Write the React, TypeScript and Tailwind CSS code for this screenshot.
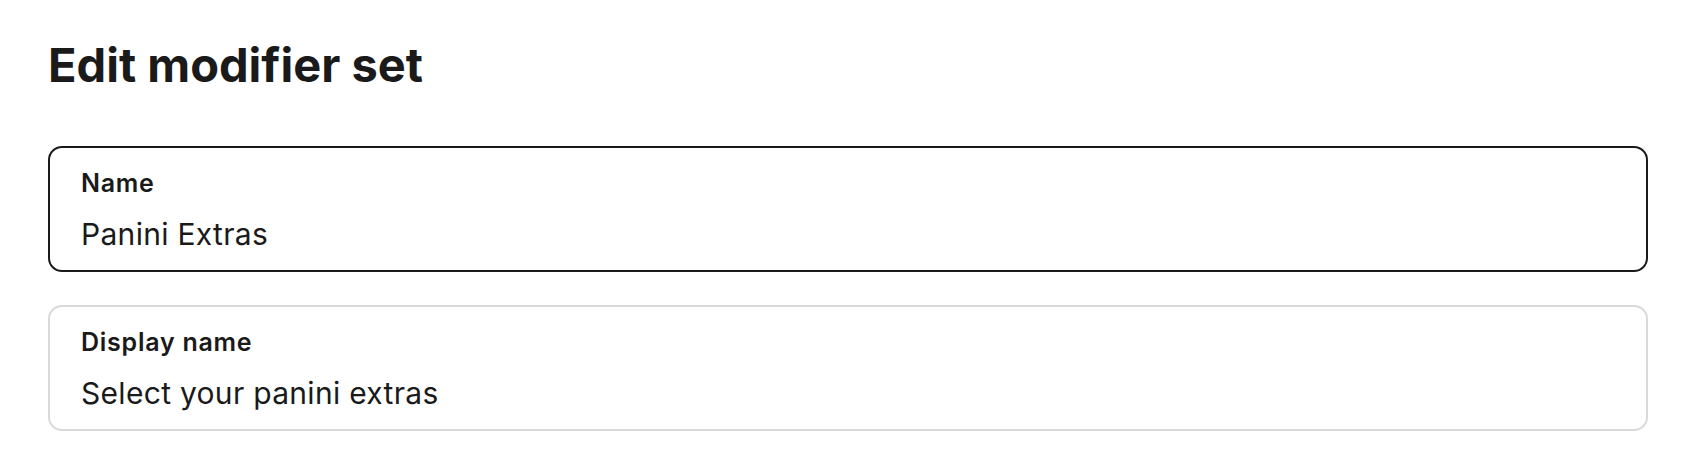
export default function App() {
  return (
    <div className="min-h-[462px] w-full bg-white pl-[48px] pr-[44px] pt-[37px] font-['Inter',sans-serif] text-[#1a1a1a]">
      <h1 className="text-[47px] leading-[56px] font-bold tracking-[0em]">Edit modifier set</h1>
      <div className="mt-[53px] flex flex-col gap-[33px]">
        <div className="flex h-[126px] flex-col gap-[15px] rounded-[14px] border-2 border-[#1a1a1a] pl-[31px] pr-[31px] pt-[19px]">
          <div className="text-[25px] leading-[32px] font-semibold tracking-[0.03em]">Name</div>
          <div className="text-[30px] leading-[40px] font-normal tracking-[0.01em]">Panini Extras</div>
        </div>
        <div className="flex h-[126px] flex-col gap-[15px] rounded-[14px] border-2 border-[#d9d9d9] pl-[31px] pr-[31px] pt-[19px]">
          <div className="text-[25px] leading-[32px] font-semibold tracking-[0.03em]">Display name</div>
          <div className="text-[30px] leading-[40px] font-normal tracking-[0.01em]">Select your panini extras</div>
        </div>
      </div>
    </div>
  );
}
